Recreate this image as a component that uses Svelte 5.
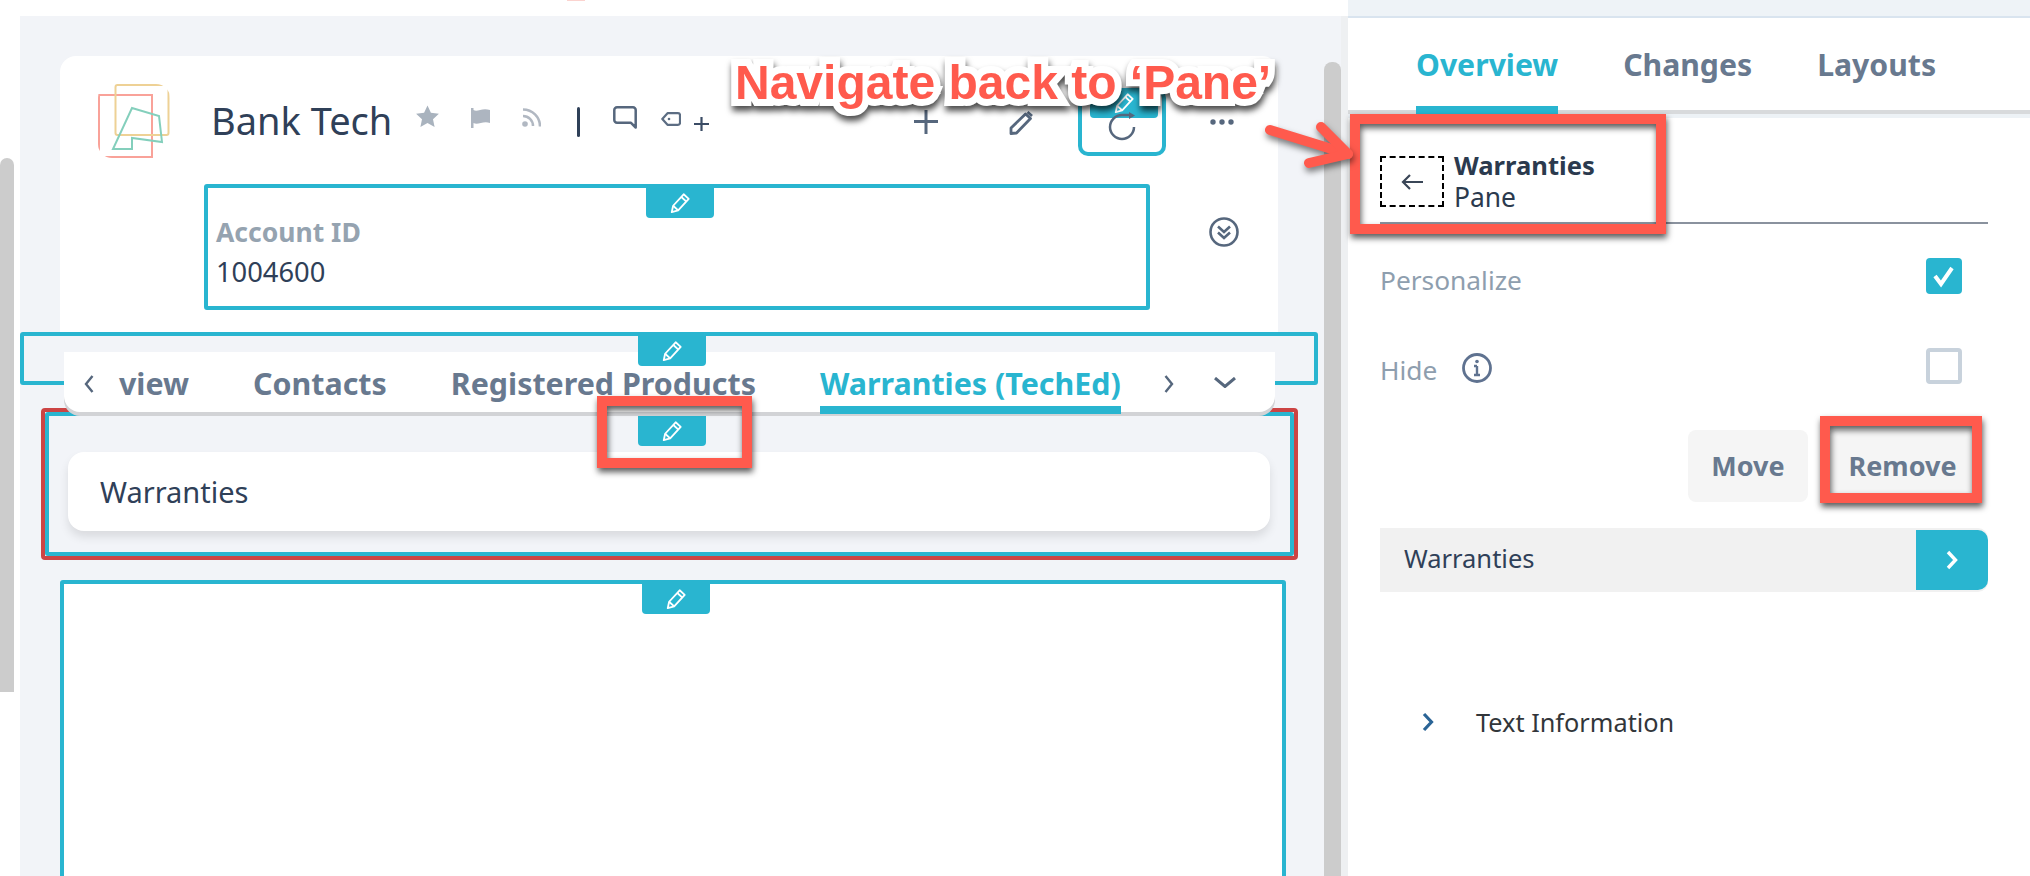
<script>
  const mainTabs = ['view', 'Contacts', 'Registered Products'];
  const panelTabs = ['Changes', 'Layouts'];
</script>

{#snippet pencil()}
  <svg class="badge-pen" viewBox="0 0 24 24" fill="none" stroke="#fff" stroke-width="2" stroke-linejoin="round"><path d="M3 22l1.5-7L16 2.5l5.5 5L10 20z"/><path d="M13.5 5.5l5.5 5"/><path d="M4.5 15l5.5 5"/></svg>
{/snippet}

<div class="page">
  <div class="left">
    <div class="rail"><div class="rail-thumb"></div></div>
    <div class="canvas">
      <div class="main">
        <section class="card">
          <div class="head">
            <svg class="logo" viewBox="0 0 72 74" fill="none" stroke-width="2">
              <defs><clipPath id="lc"><rect width="72" height="74" rx="14"/></clipPath></defs>
              <g clip-path="url(#lc)" opacity=".88">
                <rect x="1" y="11" width="53" height="62" stroke="#f9968b"/>
                <rect x="17.500" y="1" width="53" height="50" rx="2" stroke="#eccb87"/>
                <path d="M34 24l27 8 3 26-30-4v11H15z" stroke="#74c9b3"/>
              </g>
            </svg>
            <h1>Bank Tech</h1>
            <svg class="i star" viewBox="0 0 24 24"><path d="M12 .5l3.4 7.300 8 1-5.900 5.400 1.600 7.800-7.100-4-7.100 4 1.600-7.800L.6 8.800l8-1z" fill="#a9b3be"/></svg>
            <svg class="i flag" viewBox="0 0 19 20"><path d="M0 0h2.500v2c4 2.500 8-2.500 16.500 0v13c-7-2.500-12 2.500-16.500 0v5H0z" fill="#adb5c0"/></svg>
            <svg class="i rss" viewBox="0 0 19 19" fill="none" stroke="#b1b8c2" stroke-width="2.500"><circle cx="3" cy="16" r="2.800" fill="#b1b8c2" stroke="none"/><path d="M1 8a10 10 0 0 1 10 10"/><path d="M1 1.500a17 17 0 0 1 17 17"/></svg>
            <span class="sep"></span>
            <svg class="i comment" viewBox="0 0 24 23" fill="none" stroke="#56677d" stroke-width="2.500" stroke-linejoin="round"><path d="M4 1.300h16a2.700 2.700 0 0 1 2.700 2.700v17.500L18 16.800H4A2.700 2.700 0 0 1 1.300 14V4A2.700 2.700 0 0 1 4 1.300z"/></svg>
            <svg class="i tag" viewBox="0 0 20 14" fill="none" stroke="#5c6d83" stroke-width="2.200" stroke-linejoin="round"><path d="M1.300 7L6.500 1.200h10.500a2 2 0 0 1 2 2v7.600a2 2 0 0 1-2 2H6.500z"/><circle cx="8" cy="7" r="1.300" fill="#5c6d83" stroke="none"/></svg>
            <svg class="i plus-s" viewBox="0 0 15 14" stroke="#3b4c65" stroke-width="2.200"><path d="M0 7h15M7.500 0v14"/></svg>
            <svg class="i plus-l" viewBox="0 0 24 24" stroke="#56677d" stroke-width="3"><path d="M0 11.500h24M12 0v24"/></svg>
            <svg class="i pen" viewBox="0 0 24 24" fill="none" stroke="#56677d" stroke-width="2.800" stroke-linejoin="round"><path d="M2 22.500v-5.500L16.500 3l5 4.500L7.500 22z"/><path d="M18.500 1l4.500 4" /></svg>
            <div class="refresh">
              <div class="edit dark">{@render pencil()}</div>
              <svg class="i-refresh" viewBox="0 0 30 30" fill="none" stroke="#56677d" stroke-width="2.500"><path d="M27 15A12 12 0 1 1 15 3h9"/><path d="M22 0l6 3.500-6 3.500z" fill="#56677d" stroke="none"/></svg>
            </div>
            <svg class="i dots" viewBox="0 0 24 6" fill="#56677d"><circle cx="3" cy="3" r="2.700"/><circle cx="12" cy="3" r="2.700"/><circle cx="21" cy="3" r="2.700"/></svg>
          </div>
          <div class="fields">
            <div class="frame account">
              <div class="edit edit-account">{@render pencil()}</div>
              <div class="label">Account ID</div>
              <div class="value">1004600</div>
            </div>
            <svg class="collapse" viewBox="0 0 30 30" fill="none" stroke="#56677d" stroke-width="2.600"><circle cx="15" cy="15" r="13.500"/><path d="M9 9.500l6 5.500 6-5.500M9 15.500l6 5.500 6-5.500"/></svg>
          </div>
        </section>

        <div class="frame tabs-frame">
          <div class="edit edit-tabs">{@render pencil()}</div>
          <nav class="tabbar">
            <svg class="chev-l" viewBox="0 0 10 18" fill="none" stroke="#56677d" stroke-width="2.400"><path d="M8.500 1L2 9l6.500 8"/></svg>
            <div class="tabs">
              {#each mainTabs as t}<span class="tab">{t}</span>{/each}
              <span class="tab active">Warranties (TechEd)</span>
            </div>
            <svg class="chev-r" viewBox="0 0 10 18" fill="none" stroke="#56677d" stroke-width="2.400"><path d="M1.500 1L8 9l-6.500 8"/></svg>
            <svg class="chev-d" viewBox="0 0 22 11" fill="none" stroke="#56677d" stroke-width="3"><path d="M1 1l10 8.500L21 1"/></svg>
          </nav>
        </div>

        <div class="selected">
          <div class="frame section">
            <div class="edit edit-section">{@render pencil()}</div>
            <div class="warranty-card">Warranties</div>
          </div>
        </div>

        <div class="frame blank">
          <div class="edit edit-blank">{@render pencil()}</div>
        </div>
      </div>
      <div class="track"><div class="thumb"></div></div>
      <div class="gutter"></div>
    </div>
  </div>

  <aside class="panel">
    <div class="panel-top"></div>
    <div class="panel-tabs">
      <span class="tab ptab active">Overview</span>
      {#each panelTabs as t}<span class="tab ptab">{t}</span>{/each}
    </div>
    <div class="panel-body">
      <div class="crumb">
        <div class="back">
          <svg viewBox="0 0 22 16" fill="none" stroke="#3a4657" stroke-width="2.200"><path d="M22 8H2M9 1L2 8l7 7"/></svg>
        </div>
        <div>
          <div class="crumb-title">Warranties</div>
          <div class="crumb-sub">Pane</div>
        </div>
      </div>
      <div class="opt first">
        <span class="opt-label">Personalize</span>
        <span class="check on"><svg viewBox="0 0 36 36" fill="none" stroke="#fff" stroke-width="4"><path d="M9 18l6 8 11-16"/></svg></span>
      </div>
      <div class="opt second">
        <span class="opt-label">Hide</span>
        <svg class="info" viewBox="0 0 30 30" fill="none" stroke="#5f7290" stroke-width="2.800"><circle cx="15" cy="15" r="13.500"/><path d="M15 13v9M12 13h3M12 22h6" stroke-width="2.400"/><circle cx="15" cy="8.500" r="1.800" fill="#5f7290" stroke="none"/></svg>
        <span class="check"></span>
      </div>
      <div class="actions">
        <button class="btn move">Move</button>
        <button class="btn remove">Remove</button>
      </div>
      <div class="row">
        <span>Warranties</span>
        <span class="row-go"><svg viewBox="0 0 12 20" fill="none" stroke="#fff" stroke-width="3.400"><path d="M2 2l7.500 8L2 18"/></svg></span>
      </div>
      <div class="disclosure">
        <svg viewBox="0 0 12 20" fill="none" stroke="#2a6496" stroke-width="3.200"><path d="M2 2l7.500 8L2 18"/></svg>
        <span>Text Information</span>
      </div>
    </div>
  </aside>

  <div class="note-speck"></div>
  <div class="mark mark-pen"></div>
  <div class="mark mark-back"></div>
  <div class="mark mark-remove"></div>
  <svg class="arrow" viewBox="0 0 100 60" fill="none" stroke="#ff5a4d" stroke-width="10" stroke-linecap="round" stroke-linejoin="round"><path d="M6 9l78 24"/><path d="M57 6l27 27-39 9"/></svg>
  <div class="note">Navigate back to ‘Pane’</div>
</div>

<style>
  :global(body) { margin: 0; background: #fff; }
  .page {
    position: relative;
    width: 2030px;
    height: 876px;
    overflow: hidden;
    display: flex;
    font-family: "Noto Sans", sans-serif;
    color: #2f4058;
    background: #fff;
  }

  /* left column */
  .left { width: 1348px; display: flex; }
  .rail { width: 14px; margin-right: 6px; }
  .rail-thumb { margin-top: 158px; height: 534px; background: #ccc; border-radius: 7px 7px 0 0; }
  .canvas { flex: 1; margin-top: 16px; display: flex; background: #f2f4f8; }
  .main { width: 1304px; }
  .track { width: 17px; }
  .thumb { margin-top: 46px; height: 900px; background: #ccc; border-radius: 8px; }
  .gutter { width: 7px; background: #eef0f2; }

  .card {
    margin: 40px 0 0 40px;
    width: 1218px;
    height: 276px;
    background: #fff;
    border-radius: 16px 16px 0 0;
  }
  .head { display: flex; align-items: flex-start; height: 128px; box-sizing: border-box; padding: 28px 0 0 38px; }
  .logo { width: 72px; height: 74px; flex: none; }
  h1 { margin: 16px 0 0 41px; width: 183px; font-size: 38px; line-height: 40px; font-weight: 400; white-space: nowrap; }
  .i { flex: none; display: block; }
  .star { width: 25px; height: 24px; margin: 21px 0 0 21px; }
  .flag { width: 19px; height: 20px; margin: 24px 0 0 31px; }
  .rss { width: 19px; height: 19px; margin: 24px 0 0 32px; }
  .sep { width: 3px; height: 30px; margin: 23px 0 0 36px; background: #2f4058; border-radius: 2px; flex: none; }
  .comment { width: 24px; height: 23px; margin: 22px 0 0 33px; }
  .tag { width: 20px; height: 14px; margin: 28px 0 0 24px; }
  .plus-s { width: 15px; height: 14px; margin: 33px 0 0 13px; }
  .plus-l { width: 24px; height: 24px; margin: 26px 0 0 205px; }
  .pen { width: 24px; height: 24px; margin: 27px 0 0 71px; }
  .refresh {
    position: relative;
    flex: none;
    width: 88px;
    height: 68px;
    margin: 4px 0 0 45px;
    box-sizing: border-box;
    border: 4px solid #29b5d0;
    border-radius: 10px;
  }
  .i-refresh { position: absolute; left: 25px; top: 20px; width: 30px; height: 30px; z-index: 4; }
  .dots { width: 24px; height: 6px; margin: 35px 0 0 44px; }

  .fields { display: flex; align-items: flex-start; margin-left: 144px; }
  .frame { position: relative; box-sizing: border-box; border: 4px solid #29b5d0; border-radius: 3px; }
  .account { width: 946px; height: 126px; padding: 28px 0 0 8px; }
  .label { font-size: 26.500px; line-height: 32px; font-weight: 700; color: #95a3b0; }
  .value { margin-top: 8px; font-size: 27.300px; line-height: 32px; }
  .collapse { width: 30px; height: 30px; margin: 33px 0 0 59px; }

  .edit {
    position: absolute;
    z-index: 3;
    top: 0;
    width: 68px;
    height: 30px;
    display: flex;
    align-items: center;
    justify-content: center;
    background: #29b5d0;
    border-radius: 0 0 4px 4px;
  }
  .dark { left: 8px; top: -4px; }
  .badge-pen { width: 22px; height: 22px; }
  .edit-account { left: 438px; }
  .edit-tabs { left: 614px; }
  .edit-section { left: 589px; }
  .edit-blank { left: 578px; }

  /* tab strip */
  .tabs-frame { width: 1298px; height: 53px; background: #f2f4f8; padding: 16px 0 0 40px; z-index: 2; }
  .tabbar {
    display: flex;
    align-items: flex-start;
    width: 1211px;
    height: 60px;
    padding-left: 20px;
    box-sizing: border-box;
    background: #fff;
    border-radius: 0 0 16px 16px;
    box-shadow: 0 4px 0 #d2d3d6;
  }
  .chev-l { flex: none; width: 10px; height: 18px; margin: 23px 25px 0 0; }
  .tabs { display: flex; gap: 64px; flex: none; }
  .tab {
    display: block;
    height: 62px;
    box-sizing: border-box;
    padding-top: 12px;
    border-bottom: 8px solid transparent;
    font-size: 30.400px;
    line-height: 40px;
    font-weight: 700;
    color: #68798f;
    white-space: nowrap;
  }
  .tab.active { color: #29b5d0; border-bottom-color: #29b5d0; }
  .chev-r { flex: none; width: 10px; height: 18px; margin: 23px 0 0 43px; }
  .chev-d { flex: none; width: 22px; height: 11px; margin: 25px 0 0 40px; }

  /* selected section */
  .selected {
    margin: 23px 0 0 21px;
    width: 1257px;
    height: 152px;
    box-sizing: border-box;
    border: 4px solid #cc4444;
    border-radius: 4px;
  }
  .section { height: 144px; padding: 36px 0 0 19px; }
  .warranty-card {
    width: 1202px;
    height: 79px;
    box-sizing: border-box;
    padding-left: 32px;
    background: #fff;
    border-radius: 16px;
    box-shadow: 0 6px 10px rgba(0, 0, 0, .1);
    font-size: 29px;
    line-height: 79px;
  }
  .blank { margin: 20px 0 0 40px; width: 1226px; height: 400px; background: #fff; }

  /* right panel */
  .panel { flex: 1; display: flex; flex-direction: column; }
  .panel-top { height: 16px; background: #eef3f7; border-bottom: 2px solid #d9e4ef; }
  .panel-tabs {
    display: flex;
    gap: 65px;
    height: 100px;
    box-sizing: border-box;
    padding-left: 68px;
    border-bottom: 4px solid #edf2f6;
    box-shadow: inset 0 -4px 0 #d8dadc;
  }
  .ptab { height: 96px; padding-top: 27px; font-size: 30.200px; }
  .panel-body { padding: 0 42px 0 32px; }
  .crumb {
    display: flex;
    align-items: flex-start;
    gap: 10px;
    height: 74px;
    box-sizing: border-box;
    margin-top: 32px;
    border-bottom: 2px solid #8a929e;
  }
  .back {
    flex: none;
    width: 64px;
    height: 51px;
    margin-top: 6px;
    box-sizing: border-box;
    border: 2px dashed #000;
    display: flex;
    align-items: center;
    justify-content: center;
  }
  .back svg { width: 22px; height: 16px; }
  .crumb-title { font-size: 25.600px; line-height: 31px; font-weight: 700; color: #2b3a4e; }
  .crumb-sub { font-size: 26.400px; line-height: 32px; color: #2b3a4e; }
  .opt { display: flex; align-items: flex-start; height: 36px; padding-right: 26px; }
  .first { margin-top: 34px; }
  .second { margin-top: 54px; }
  .opt-label { font-size: 26.300px; line-height: 36px; margin-top: 4px; color: #8e9eae; }
  .info { width: 30px; height: 30px; margin: 5px 0 0 25px; }
  .check {
    margin-left: auto;
    width: 36px;
    height: 36px;
    box-sizing: border-box;
    border: 4px solid #c8d2dc;
    border-radius: 4px;
  }
  .check.on { border: 0; background: #29b5d0; }
  .check svg { display: block; width: 36px; height: 36px; }
  .actions { display: flex; justify-content: flex-end; gap: 20px; margin-top: 46px; padding-right: 11px; }
  .btn {
    height: 72px;
    padding: 0;
    border: 0;
    border-radius: 8px;
    background: #f5f5f5;
    font: 700 27px/72px "Noto Sans", sans-serif;
    color: #68798f;
  }
  .move { width: 120px; }
  .remove { width: 149px; }
  .row {
    display: flex;
    align-items: center;
    justify-content: space-between;
    height: 64px;
    margin-top: 26px;
    padding-left: 24px;
    background: #f1f1f1;
    border-radius: 0 10px 10px 0;
    font-size: 25.500px;
  }
  .row > span:first-child { line-height: 60px; margin-top: -4px; }
  .row-go {
    width: 72px;
    height: 60px;
    display: flex;
    align-items: center;
    justify-content: center;
    background: #29b5d0;
    border-radius: 0 10px 10px 0;
  }
  .row-go svg { width: 12px; height: 20px; }
  .disclosure {
    display: flex;
    align-items: center;
    gap: 42px;
    margin-top: 112px;
    padding-left: 42px;
    font-size: 25.300px;
    line-height: 36px;
    color: #32363a;
  }
  .disclosure svg { width: 12px; height: 20px; }

  /* annotations drawn over the screenshot */
  .note-speck { position: absolute; left: 567px; top: 0; width: 18px; height: 1px; background: #fbd3cf; }
  .mark {
    position: absolute;
    z-index: 5;
    box-sizing: border-box;
    border: 10px solid #ff5a4d;
    filter: drop-shadow(1px 4px 3px rgba(0, 0, 0, .65));
  }
  .mark-pen { left: 597px; top: 396px; width: 155px; height: 72px; }
  .mark-back { left: 1350px; top: 114px; width: 316px; height: 120px; }
  .mark-remove { left: 1820px; top: 416px; width: 162px; height: 87px; }
  .arrow {
    position: absolute;
    z-index: 5;
    left: 1264px;
    top: 121px;
    width: 100px;
    height: 60px;
    filter: drop-shadow(1px 4px 3px rgba(0, 0, 0, .5));
  }
  .note {
    position: absolute;
    z-index: 6;
    left: 735px;
    top: 55px;
    font: 700 48px/56px "Liberation Sans", Arial, sans-serif;
    color: #ff5a4d;
    white-space: nowrap;
    -webkit-text-stroke: 14px #fff;
    paint-order: stroke fill;
    stroke-linejoin: round;
    filter: drop-shadow(1px 5px 3px rgba(0, 0, 0, .7));
  }
</style>
